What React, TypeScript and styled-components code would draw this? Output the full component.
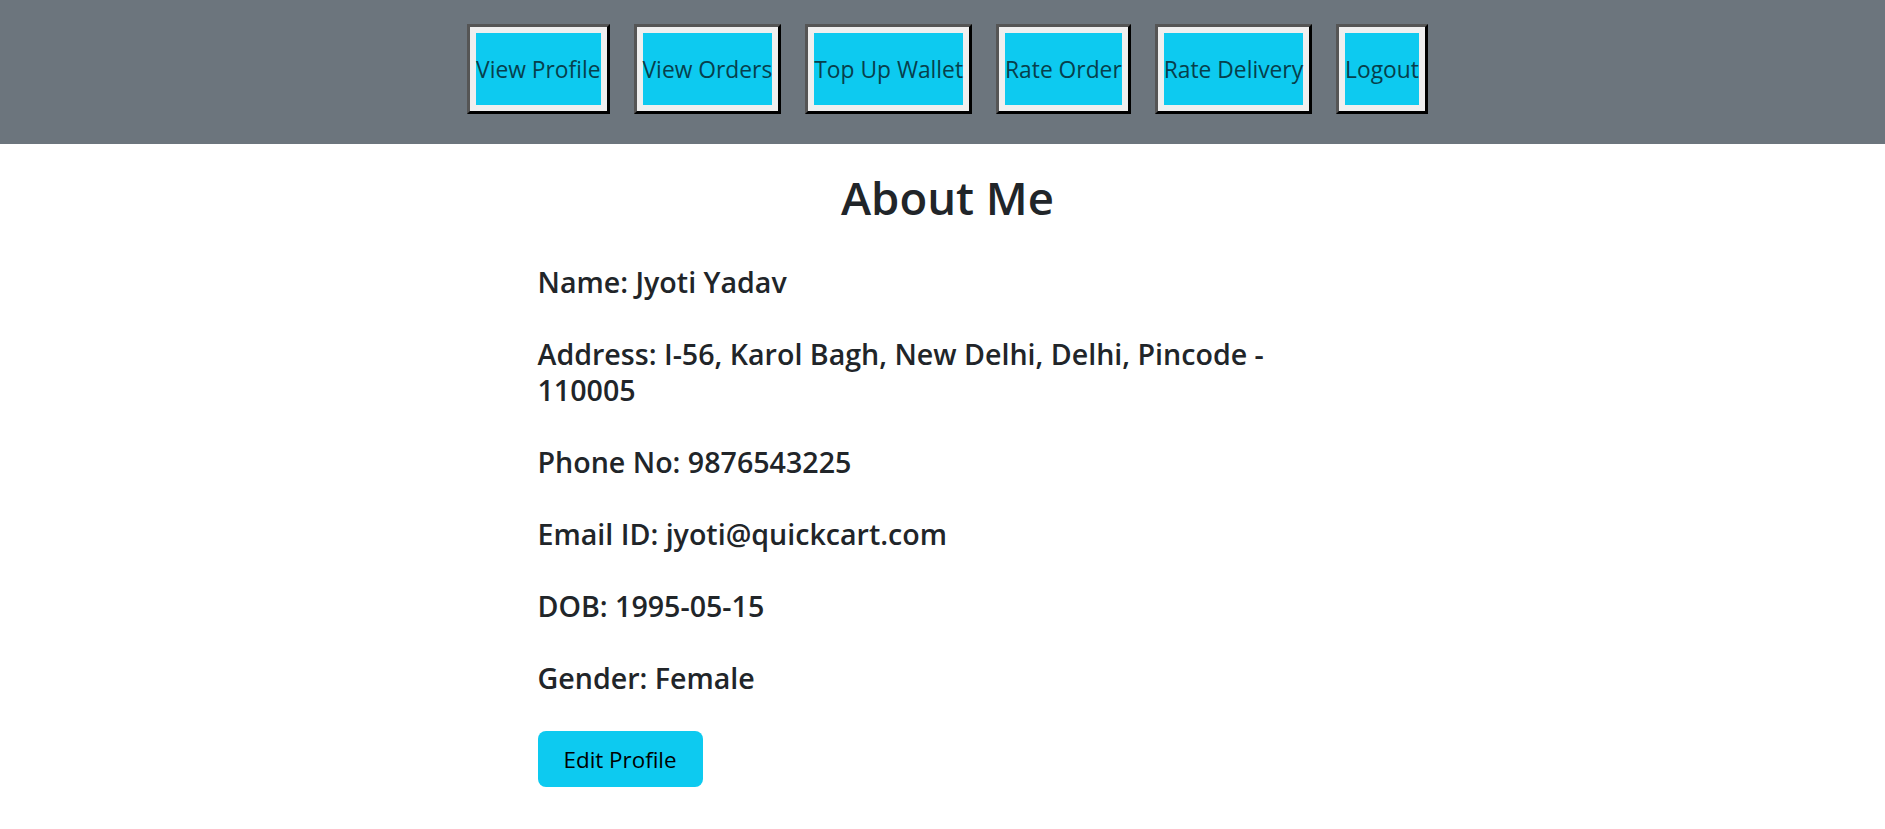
import React from "react";
import styled, { createGlobalStyle } from "styled-components";

const GlobalStyle = createGlobalStyle`
  html, body {
    margin: 0;
    padding: 0;
    background: #ffffff;
    font-family: "Open Sans", "Noto Sans", "Liberation Sans", sans-serif;
    color: #212529;
  }
  * { box-sizing: border-box; }
`;

const NavBar = styled.nav`
  height: 144px;
  background: #6c757d;
  display: flex;
  justify-content: center;
  align-items: flex-start;
  gap: 24px;
  padding: 24px 0 0 10px;
`;

const NavButton = styled.button`
  display: flex;
  padding: 6px;
  margin: 0;
  background: #efefef;
  border: 3px solid;
  border-color: #555555 #000000 #000000 #555555;
  cursor: pointer;
  font-family: inherit;
`;

const NavLabel = styled.span`
  display: flex;
  align-items: center;
  height: 72px;
  padding: 0;
  background: #0dcaf0;
  color: #073f4c;
  font-size: 22.8px;
  font-weight: 400;
  white-space: nowrap;
`;

const Page = styled.div`
  padding-left: 10px;
`;

const Content = styled.main`
  width: 820px;
  margin: 0 auto;
`;

const Title = styled.h1`
  margin: 23px 0 37px;
  font-size: 45.5px;
  line-height: 60px;
  font-weight: 600;
  text-align: center;
  color: #212529;
`;

const InfoLine = styled.h4`
  max-width: 800px;
  margin: 0 0 36px;
  font-size: 28.6px;
  line-height: 36px;
  font-weight: 600;
  color: #212529;
`;

const EditButton = styled.button`
  height: 56px;
  padding: 0 26px;
  margin: -1px 0 0;
  border: none;
  border-radius: 8px;
  background: #0dcaf0;
  color: #000000;
  font-family: inherit;
  font-size: 22.4px;
  font-weight: 400;
  cursor: pointer;
`;

const navItems = [
  "View Profile",
  "View Orders",
  "Top Up Wallet",
  "Rate Order",
  "Rate Delivery",
  "Logout",
];

const details = [
  "Name: Jyoti Yadav",
  "Address: I-56, Karol Bagh, New Delhi, Delhi, Pincode - 110005",
  "Phone No: 9876543225",
  "Email ID: jyoti@quickcart.com",
  "DOB: 1995-05-15",
  "Gender: Female",
];

export default function App() {
  return (
    <>
      <GlobalStyle />
      <NavBar>
        {navItems.map((item) => (
          <NavButton key={item}>
            <NavLabel>{item}</NavLabel>
          </NavButton>
        ))}
      </NavBar>
      <Page>
        <Content>
          <Title>About Me</Title>
          {details.map((d) => (
            <InfoLine key={d}>{d}</InfoLine>
          ))}
          <EditButton>Edit Profile</EditButton>
        </Content>
      </Page>
    </>
  );
}
